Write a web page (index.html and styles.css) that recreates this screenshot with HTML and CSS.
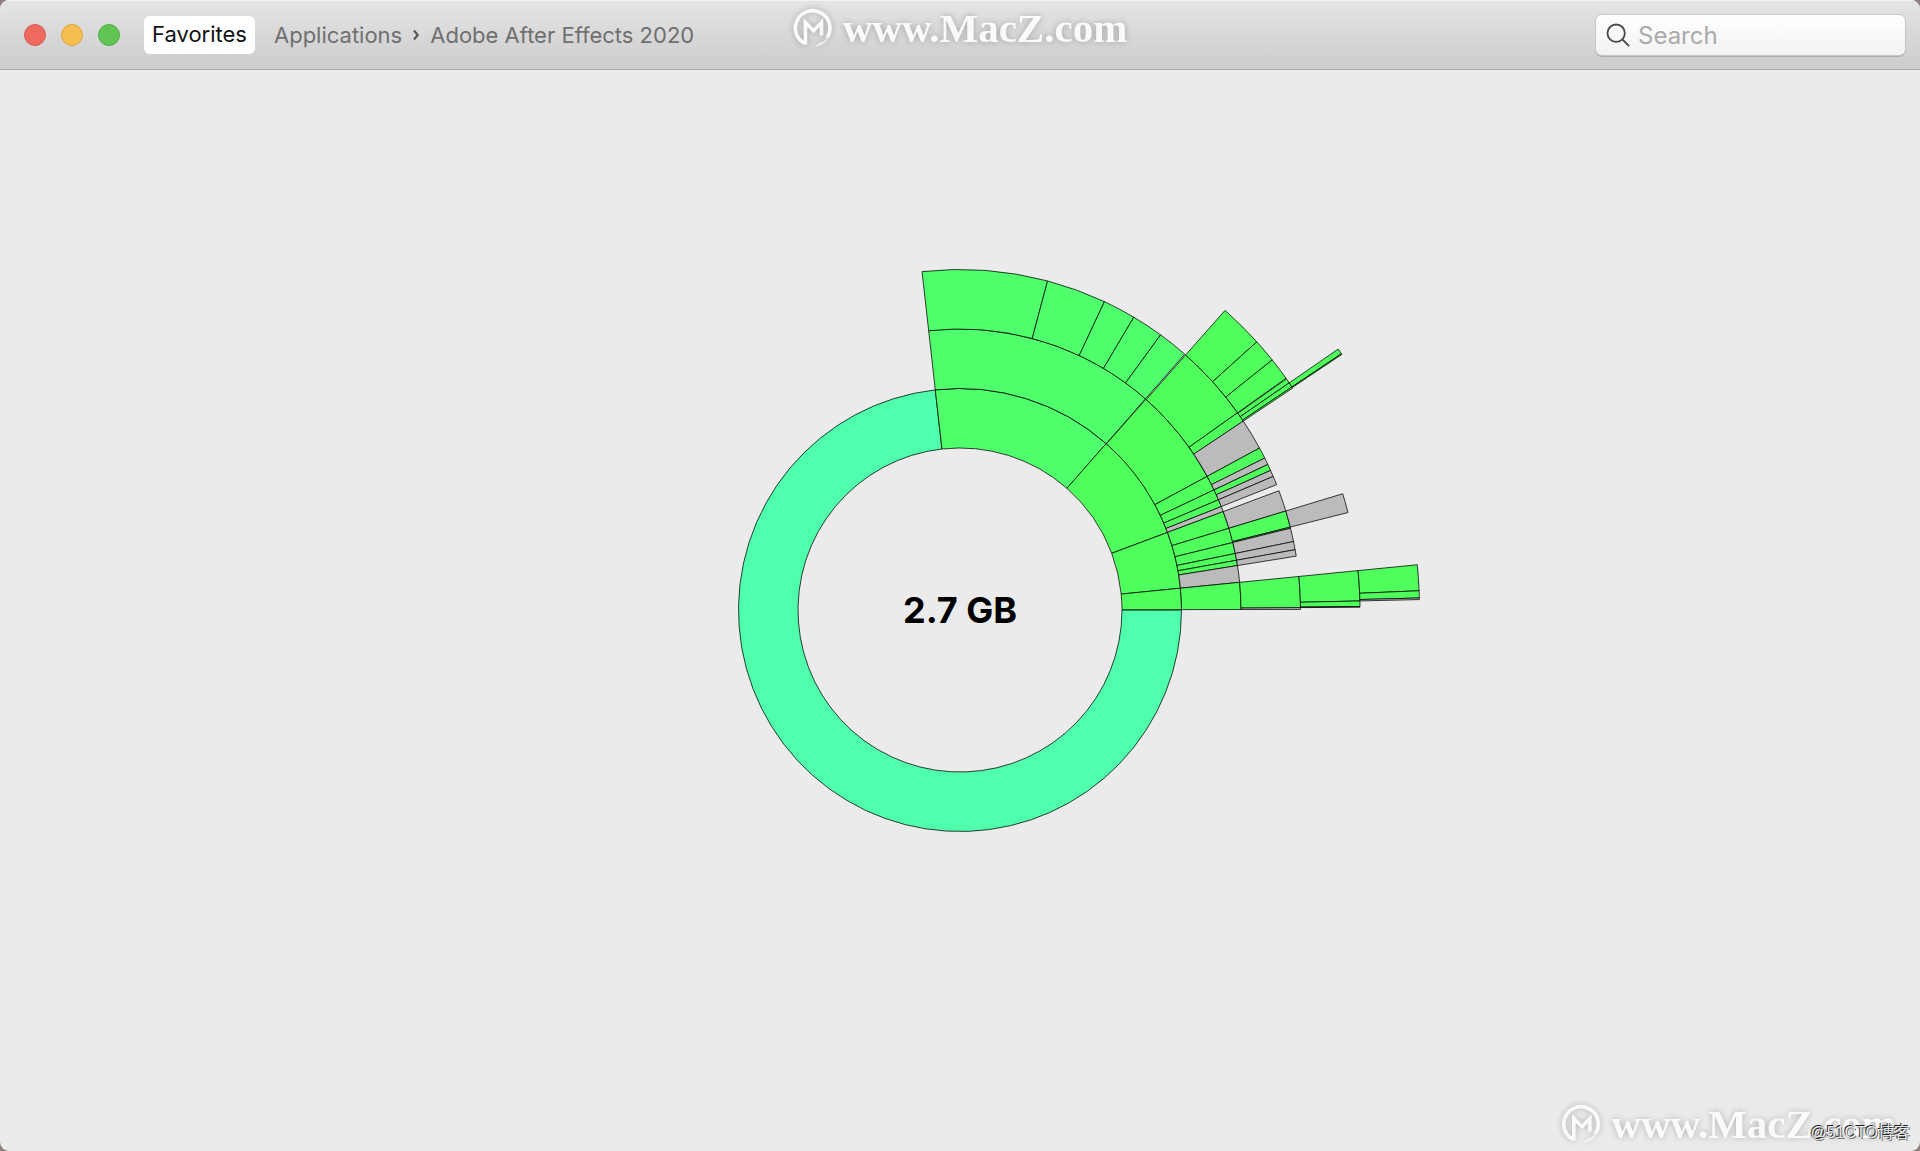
FILE: index.html
```html
<!DOCTYPE html>
<html lang="en">
<head>
<meta charset="utf-8">
<meta name="viewport" content="width=device-width, initial-scale=1">
<title>Adobe After Effects 2020</title>
<link rel="stylesheet" href="styles.css">
</head>
<body>
<div class="window">
  <header class="toolbar">
    <div class="lights">
      <button class="light light-close" aria-label="Close"></button>
      <button class="light light-min" aria-label="Minimize"></button>
      <button class="light light-zoom" aria-label="Zoom"></button>
    </div>
    <button class="favorites">Favorites</button>
    <nav class="path" aria-label="Path">
      <a href="#apps">Applications</a>
      <svg class="chevron" viewBox="0 0 8 12" aria-hidden="true"><path d="M2 1.5L5.8 6L2 10.5"/></svg>
      <a href="#ae">Adobe After Effects 2020</a>
    </nav>
    <label class="search">
      <svg class="search-icon" viewBox="0 0 26 26" aria-hidden="true"><circle cx="11" cy="11" r="9.4"/><path d="M17.6 17.6L25 25"/></svg>
      <input type="search" placeholder="Search" aria-label="Search">
    </label>
  </header>
  <main class="content">
    <svg class="sunburst" viewBox="-460 -460 920 920" role="img" aria-label="Disk usage">
      <g id="rings"></g>
      <text class="total" x="0" y="13">2.7 GB</text>
    </svg>
  </main>
  <div class="mark mark-top">
    <svg class="mark-logo" viewBox="0 0 40 40" aria-hidden="true"><use href="#logo"/></svg>
    <span>www.MacZ.com</span>
  </div>
  <div class="mark mark-bottom">
    <svg class="mark-logo" viewBox="0 0 40 40" aria-hidden="true"><use href="#logo"/></svg>
    <span>www.MacZ.com</span>
  </div>
  <div class="credit">@51CTO博客</div>
</div>
<svg class="defs" aria-hidden="true">
  <symbol id="logo" viewBox="0 0 40 40">
    <path fill="none" stroke="currentColor" stroke-width="3.6" d="M12.8 36.5V14.500L21 22.7L28.800 14.500V27.500M12.8 35.700A17.3 17.3 0 1 1 34.500 29.500"/>
    <path fill="none" stroke="currentColor" stroke-width="1" d="M36 28.5Q31.500 35 25 36.500M34 33Q30 37 23 38"/>
  </symbol>
</svg>
<script src="chart.js"></script>
</body>
</html>
```
FILE: styles.css
```css
* { box-sizing: border-box; }

body {
  margin: 0;
  background: #8d7f7c;
  font-family: Inter, "Liberation Sans", sans-serif;
}

button, input { font: inherit; }

.window {
  position: relative;
  display: flex;
  flex-direction: column;
  min-height: 100vh;
  overflow: hidden;
  border-radius: 9px;
  background: #ebebeb;
}

.toolbar {
  display: flex;
  align-items: center;
  height: 70px;
  padding: 0 15px 0 24px;
  border-bottom: 1px solid #a9a9a9;
  background: linear-gradient(#e5e5e5, #cccccc);
  box-shadow: inset 0 1px #f3f3f3;
}

.lights { display: flex; gap: 15px; }

.light {
  width: 22px;
  height: 22px;
  padding: 0;
  border: 1px solid;
  border-radius: 50%;
}

.light-close { background: #ee6a5f; border-color: #d9594e; }
.light-min { background: #f5bf4f; border-color: #dba53c; }
.light-zoom { background: #61c554; border-color: #4fac43; }

.favorites {
  height: 38px;
  margin-left: 24px;
  padding: 0 8px 2px;
  border: 0;
  border-radius: 6px;
  background: #fff;
  color: #111;
  font-size: 22px;
  line-height: 28px;
}

.path {
  display: flex;
  align-items: center;
  gap: 10px;
  margin-left: 19px;
  font-size: 22px;
  line-height: 28px;
}

.path a { color: #6f6f6f; text-decoration: none; }

.chevron {
  width: 8px;
  height: 12px;
  fill: none;
  stroke: #555;
  stroke-width: 2;
}

.search {
  display: flex;
  align-items: center;
  gap: 8px;
  width: 309px;
  height: 40px;
  margin-left: auto;
  padding: 0 10px;
  border-radius: 6px;
  background: linear-gradient(#fff, #f2f2f2);
  box-shadow: 0 0 0 1px #c6c6c6, 0 2px 1px #aaa;
}

.search-icon {
  width: 24px;
  height: 24px;
  flex: none;
  fill: none;
  stroke: #4a4a4a;
  stroke-width: 2;
}

.search input {
  min-width: 0;
  flex: 1;
  padding: 2px 0 0;
  border: 0;
  outline: 0;
  background: none;
  font-size: 24px;
  line-height: 28px;
}

.search input::placeholder { color: #aaa; }

.content {
  display: flex;
  flex: 1;
  align-items: center;
  justify-content: center;
  padding-bottom: 1px;
}

.sunburst {
  width: 100%;
  max-width: 920px;
  overflow: visible;
}

.arc {
  stroke: rgba(0, 0, 0, 0.75);
  stroke-width: 1;
  stroke-linejoin: round;
}

.arc-teal { fill: #4fffab; }
.arc-lime { fill: #4fff6b; }
.arc-green { fill: #4fff5c; }
.arc-gray { fill: #bbb; }

.total {
  font-size: 36px;
  font-weight: 700;
  text-anchor: middle;
}

.mark {
  position: absolute;
  display: flex;
  align-items: center;
  gap: 10px;
  color: #fafafa;
  font-family: "Liberation Serif", serif;
  font-size: 41px;
  font-weight: 700;
  line-height: 40px;
  filter: drop-shadow(0 0 3px rgba(0, 0, 0, 0.25));
  pointer-events: none;
}

.mark-top { top: 8px; left: 50%; transform: translateX(-50%); }
.mark-bottom { right: 24px; bottom: 7px; }
.mark-logo { width: 40px; height: 40px; }

.credit {
  position: absolute;
  right: 10px;
  bottom: 6px;
  color: #e8e8e8;
  font-family: "Liberation Sans", "Noto Sans CJK SC", sans-serif;
  font-size: 16px;
  line-height: 24px;
  text-shadow: -1px -1px #222, 1px 1px #777;
}

.defs { display: none; }
```
FILE: chart.js
```js
// Each ring lists its slices as [start angle, end angle, kind],
// in degrees counter-clockwise from three o'clock.
const INNER = 162;
const STEP = 59.5;

const rings = [
  [[96.4, 360, "teal"], [48.7, 96.4, "lime"], [20.5, 48.7, "green"], [5.65, 20.5, "green"], [0.1, 5.65, "green"]],
  [
    [48.7, 96.4, "lime"],
    [28.4, 48.6, "green"], [25.3, 28.4, "green"], [23.1, 25.3, "green"], [21.6, 23.1, "green"], [20.5, 21.6, "gray"],
    [16.9, 20.5, "green"], [13.9, 16.9, "green"], [11.6, 13.9, "green"], [10.2, 11.6, "green"], [9.1, 10.2, "green"],
    [5.65, 9.1, "gray"], [0.1, 5.65, "green"]
  ],
  [
    [75.1, 96.4, "lime"], [64.9, 75.1, "lime"], [59.3, 64.9, "lime"], [53.9, 59.3, "lime"], [48.7, 53.9, "lime"],
    [35.4, 48.5, "green"], [33.7, 35.4, "green"], [28.4, 33.7, "gray"],
    [26.5, 28.4, "green"], [25.3, 26.5, "gray"], [24.2, 25.3, "green"], [23.1, 24.2, "gray"], [21.6, 23.1, "gray"],
    [16.9, 20.5, "gray"], [14.1, 16.9, "green"], [13.9, 14.1, "green"],
    [11.6, 13.9, "gray"], [10.2, 11.6, "gray"], [9.1, 10.2, "gray"],
    [0.4, 5.65, "green"], [0.1, 0.4, "gray"]
  ],
  [
    [42.1, 48.5, "green"], [38.7, 42.1, "green"], [35.4, 38.7, "green"], [34.6, 35.3, "green"],
    [33.9, 34.6, "green"], [33.7, 33.9, "green"],
    [14.1, 16.9, "gray"],
    [1.3, 5.65, "green"], [0.5, 1.3, "green"], [0.4, 0.5, "gray"]
  ],
  [
    [33.9, 34.6, "green"], [33.8, 33.9, "green"],
    [2.4, 5.65, "green"], [1.5, 2.4, "green"], [1.3, 1.5, "gray"]
  ]
];

function point(radius, degrees) {
  const a = degrees * Math.PI / 180;
  return (radius * Math.cos(a)).toFixed(2) + " " + (-radius * Math.sin(a)).toFixed(2);
}

function slicePath(r0, r1, start, end) {
  const large = end - start > 180 ? 1 : 0;
  return `M${point(r0, start)}L${point(r1, start)}A${r1} ${r1} 0 ${large} 0 ${point(r1, end)}` +
    `L${point(r0, end)}A${r0} ${r0} 0 ${large} 1 ${point(r0, start)}Z`;
}

const group = document.getElementById("rings");
rings.forEach((slices, level) => {
  const r0 = INNER + STEP * level;
  for (const [start, end, kind] of slices) {
    const path = document.createElementNS("http://www.w3.org/2000/svg", "path");
    path.setAttribute("class", "arc arc-" + kind);
    path.setAttribute("d", slicePath(r0, r0 + STEP, start, end));
    group.append(path);
  }
});
```
